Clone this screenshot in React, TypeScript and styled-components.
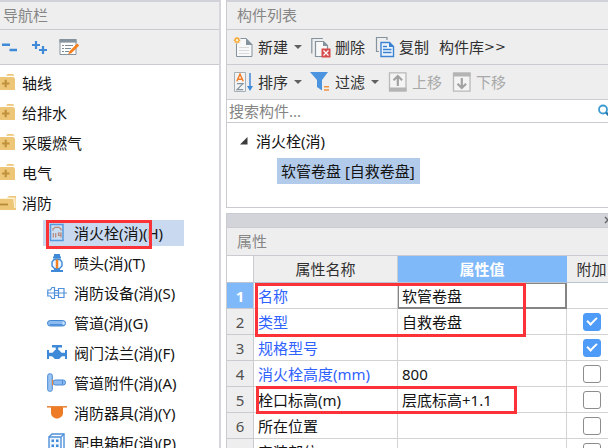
import React from "react";
import styled, { createGlobalStyle, css } from "styled-components";

const line = "#c9cbd0";
const blue = "#3f8ad8";
const steel = "#84939e";

const GlobalStyle = createGlobalStyle`
  *, *::before, *::after { box-sizing: border-box; }
  body {
    margin: 0;
    background: #fff;
    color: #141414;
    font: 15px/20px "Noto Sans", "Noto Sans CJK SC", sans-serif;
  }
  button, input { font: inherit; color: inherit; }
`;

const Workspace = styled.div`
  display: flex;
  gap: 5px;
  height: 100vh;
  overflow: hidden;
`;

const Sidebar = styled.aside`
  flex: 0 0 221px;
  display: flex;
  flex-direction: column;
  overflow: hidden;
  border-top: 2px solid #d0d2d8;
  border-right: 2px solid #d6d7dc;
`;

const Main = styled.main`
  flex: 1;
  min-width: 0;
  display: flex;
  flex-direction: column;
  gap: 5px;
  overflow: hidden;
`;

const Panel = styled.section<{ $grow?: boolean }>`
  display: flex;
  flex-direction: column;
  overflow: hidden;
  border-left: 1px solid ${line};
  ${(p) =>
    p.$grow
      ? css`flex: 1;`
      : css`
          flex: none;
          border-top: 2px solid #d0d2d8;
          border-bottom: 1px solid ${line};
        `}
`;

const PanelTitle = styled.h2<{ $inset: number }>`
  flex: none;
  margin: 0;
  padding: 3px 0 4px ${(p) => p.$inset}px;
  border-bottom: 1px solid ${line};
  background: #eee;
  color: #868686;
  font-size: 15px;
  font-weight: 400;
  line-height: 20px;
`;

const Toolbar = styled.div<{ $inset?: number }>`
  flex: none;
  display: flex;
  align-items: center;
  gap: 10px;
  height: 35px;
  padding-left: ${(p) => p.$inset ?? 0}px;
  border-bottom: 1px solid ${line};
  background: #eee;
`;

const ToolButton = styled.button`
  flex: none;
  display: flex;
  align-items: center;
  gap: 4px;
  padding: 0;
  border: 0;
  background: none;
  color: #303030;
  white-space: nowrap;
  &:disabled { color: #a9a9a9; }
`;

const Caret = styled.span`
  margin: 0 -1px 0 2px;
  border: solid transparent;
  border-width: 4px 4px 0;
  border-top-color: #606060;
`;

const More = styled.span`
  margin-left: -4px;
  font: 13px/20px "DejaVu Sans", sans-serif;
`;

const Tree = styled.ul<{ $nested?: boolean }>`
  margin: 0;
  padding: ${(p) => (p.$nested ? "0 0 0 43px" : "3px 0 0")};
  list-style: none;
  white-space: nowrap;
`;

const Folder = styled.div`
  display: flex;
  align-items: center;
  gap: 6px;
  height: 30px;
`;

const Leaf = styled.li<{ $selected?: boolean }>`
  position: relative;
  display: flex;
  align-items: center;
  gap: 7px;
  width: max-content;
  min-width: 141px;
  height: 26px;
  margin: 2px 0 4px;
  padding: 0 4px;
  background: ${(p) => (p.$selected ? "#c9d9ef" : "transparent")};
`;

const Icon = styled.svg`
  display: block;
  flex: none;
  overflow: visible;
`;

const Mark = styled.div<{ $x: number; $y: number; $w: number; $h: number }>`
  position: absolute;
  left: ${(p) => p.$x}px;
  top: ${(p) => p.$y}px;
  width: ${(p) => p.$w}px;
  height: ${(p) => p.$h}px;
  border: 3px solid #fb3338;
  pointer-events: none;
`;

const Search = styled.form`
  flex: none;
  display: flex;
  align-items: center;
  height: 23px;
  border-bottom: 1px solid ${line};
  background: #fff;
`;

const SearchInput = styled.input`
  flex: 1;
  min-width: 0;
  height: 20px;
  padding: 0 2px;
  border: 0;
  outline: 0;
  background: none;
  &::placeholder { color: #858585; opacity: 1; }
`;

const EdgeButton = styled.button`
  flex: none;
  margin-right: -5px;
  padding: 0;
  border: 0;
  background: none;
`;

const ComponentList = styled.div`
  display: flex;
  flex-direction: column;
  align-items: flex-start;
  gap: 4px;
  padding: 5px 0 23px;
`;

const Group = styled.div`
  display: flex;
  align-items: center;
  gap: 8px;
  height: 26px;
  padding-left: 13px;
`;

const SelectedComponent = styled.div`
  height: 26px;
  margin-left: 50px;
  padding: 3px 5px 3px 4px;
  background: #b2cbea;
`;

const Splitter = styled.div`
  flex: none;
  display: flex;
  align-items: center;
  justify-content: flex-end;
  height: 15px;
  border: solid ${line};
  border-width: 1px 0;
  background: #d3d4da;
`;

const GridArea = styled.div`
  position: relative;
  flex: 1;
  overflow: hidden;
`;

const Grid = styled.table`
  width: 390px;
  table-layout: fixed;
  border-collapse: separate;
  border-spacing: 0;
  white-space: nowrap;
`;

const Col = styled.col<{ $w: number }>`
  width: ${(p) => p.$w}px;
`;

const cell = css`
  height: 26px;
  padding: 0;
  border: solid #d3d3d3;
  border-width: 0 1px 1px 0;
  font-weight: 400;
`;

const HeadCell = styled.th<{ $active?: boolean; $corner?: boolean }>`
  ${cell}
  height: 27px;
  border-color: ${(p) => (p.$active ? "#7fb9fa" : "#cbccd0")};
  border-bottom-color: #b9c4d2;
  background: ${(p) => (p.$active ? "#7fb9fa" : p.$corner ? "#fff" : "#eee")};
  color: ${(p) => (p.$active ? "#fff" : "#303030")};
  font-weight: ${(p) => (p.$active ? 700 : 400)};
`;

const RowNumber = styled.th<{ $active?: boolean }>`
  ${cell}
  border-color: ${line};
  background: ${(p) => (p.$active ? "#7fb9fa" : "#eee")};
  color: ${(p) => (p.$active ? "#fff" : "#505050")};
  font-weight: ${(p) => (p.$active ? 700 : 400)};
`;

const NameCell = styled.td<{ $link?: boolean }>`
  ${cell}
  padding-left: 4px;
  color: ${(p) => (p.$link ? "#2f62ff" : "#141414")};
`;

const ValueCell = styled.td<{ $focus?: boolean }>`
  ${cell}
  padding-left: 4px;
  ${(p) =>
    p.$focus &&
    css`
      border-color: #858585;
      box-shadow: inset 1px 1px #858585, inset -1px -1px #858585;
    `}
`;

const CheckCell = styled.td`
  ${cell}
`;

const Check = styled.input`
  appearance: none;
  display: block;
  width: 18px;
  height: 18px;
  margin: 0 auto;
  border: 1px solid #8c8c8c;
  border-radius: 3px;
  background: #fff;
  &:checked {
    border-color: #4f9bf8;
    background: #4f9bf8;
  }
  &:checked::before {
    content: "";
    display: block;
    width: 6px;
    height: 10px;
    margin: 1px 0 0 5px;
    border: solid #fff;
    border-width: 0 2px 2px 0;
    transform: rotate(45deg);
  }
`;

const NavIcon = ({ children }: { children: React.ReactNode }) => (
  <Icon width="20" height="20" viewBox="0 0 20 20" aria-hidden="true" fill="none">
    {children}
  </Icon>
);

const CollapseIcon = () => (
  <NavIcon>
    <path d="M2 7.8h8M9.5 13h7.5" stroke={blue} strokeWidth="2.4" />
  </NavIcon>
);

const ExpandIcon = () => (
  <NavIcon>
    <path d="M2 8h8M6 4v8M9 13h8M13 9v8" stroke={blue} strokeWidth="2.2" />
  </NavIcon>
);

const EditIcon = () => (
  <NavIcon>
    <path d="M0 2.5h16v15H0z" fill="#fff" stroke={steel} />
    <path d="M-.5 2h17v3.6h-17z" fill={steel} />
    <path d="M2 8.5h2M2 11.5h2M2 14.5h2M5 8.5h8M5 11.5h6M5 14.5h4" stroke="#7d8b96" />
    <path d="m9.5 14.2-1.4 3 3.3-1 7.8-7.6-2.1-2z" fill="#f5811f" />
  </NavIcon>
);

const FolderIcon = ({ open }: { open?: boolean }) => (
  <Icon width="16" height="20" viewBox="0 0 16 20" aria-hidden="true" fill="none">
    {open ? (
      <>
        <path d="M0 5h7l2-2h7v14H0z" fill="#edc678" />
        <path d="M0 5.5h13.5L15 15V5H8" stroke="#fff3d7" strokeWidth="1" />
        <path d="M0 11.5h8" stroke="#b98a35" strokeWidth="1.8" />
      </>
    ) : (
      <>
        <path d="M6 2.8 7.5 1H13l1.5 1.8z" fill="#edc678" />
        <path d="M0 4h13.5L15 5.5V17H0z" fill="#edc678" />
        <path d="M2 10.5h7.5M5.7 6.8v7.4" stroke="#c1923c" strokeWidth="2.2" />
      </>
    )}
  </Icon>
);

const HydrantIcon = () => (
  <NavIcon>
    <path d="M3.5 1.5H16v16H3.5z" fill="#c9ddf3" stroke="#5799df" strokeWidth="1.5" />
    <path d="M6 7.5V6l2-1.7h4L14 6v1.5" stroke="#b98777" strokeWidth="1.3" />
    <path d="M6.3 10v4.5M8.7 10v4.5M14 14.5V10h-2.5v2.3H14" stroke="#b98777" strokeWidth="1.2" />
  </NavIcon>
);

const SprinklerIcon = () => (
  <NavIcon>
    <path d="M7 1h6v3l-1 1.5H8L7 4z" fill={blue} />
    <path d="M6 4.5h8M4 18h12" stroke={blue} strokeWidth="1.8" />
    <path d="M7 6.5h6L15 9v4l-3 3H8l-3-3V9z" fill="#eef4fb" stroke={blue} strokeWidth="1.4" />
    <path d="M7.5 15h5l1 3h-7z" fill={blue} />
    <path d="M10 6.5v9" stroke="#f08126" strokeWidth="2.4" />
  </NavIcon>
);

const DeviceIcon = () => (
  <NavIcon>
    <g stroke="#4f91da" strokeWidth="1.2">
      <path d="M.8 7v6h2.7l1.5 2.5h2.5v-11H5L3.5 7zM7.5 7.5h4M7.5 12.5h4M11.5 5.5H17v9h-5.5zM0 10h20" />
    </g>
  </NavIcon>
);

const PipeIcon = () => (
  <NavIcon>
    <rect x=".5" y="7.5" width="18" height="5.5" rx="2.7" fill="#8dbbf0" stroke="#4489d6" />
    <path d="M3 11.8h14" stroke="#4489d6" strokeWidth="1.4" />
    <ellipse cx="16.4" cy="10.2" rx="1.2" ry="1.8" fill="#c5defa" />
  </NavIcon>
);

const ValveIcon = () => (
  <NavIcon>
    <path d="M5 3.3h10M10 3v5" stroke={blue} strokeWidth="2.6" />
    <path d="M1 7v9M19 7v9" stroke={blue} strokeWidth="2" />
    <path d="M1 9.8h4.5L8 7h4l2.5 2.8H19v3.4h-4L12 16H8l-3-2.8H1z" fill={blue} />
  </NavIcon>
);

const FittingIcon = () => (
  <NavIcon>
    <rect x="6" y="7" width="12.5" height="5" rx="2.3" fill="#8dbbf0" stroke="#4489d6" />
    <rect x=".7" y=".8" width="4.6" height="17.5" rx="1.8" fill="#9cc5f3" stroke="#4489d6" />
    <path d="M5.5 6.5v6" stroke="#e8873b" strokeWidth="1.2" />
    <path d="M15.5 7.5v4" stroke="#4489d6" />
  </NavIcon>
);

const ApplianceIcon = () => (
  <NavIcon>
    <path d="M0 3h20v1.6H0z" fill="#e9883f" />
    <path d="M4 4h12v6c0 3-3 5.5-6 5.5S4 13 4 10z" fill="#ee7b25" />
  </NavIcon>
);

const CabinetIcon = () => (
  <NavIcon>
    <path d="M2 4 5 1h12v16l-3 3" stroke="#4f91da" strokeWidth="1.4" />
    <path d="M2 4h12v16H2zM14 4l3-3" fill="#eef5fd" stroke="#4f91da" strokeWidth="1.4" />
    <path d="M4.5 6.5H7V9H4.5zM9 6.5h2.5V9H9zM4.5 11.5H7V14H4.5zM9 11.5h2.5V14H9z" fill="#3f8ad8" />
    <path d="M4 17h8" stroke="#4f91da" />
  </NavIcon>
);

const NewIcon = () => (
  <NavIcon>
    <path d="M2.5 1.5H12l6 6v12H2.5z" fill="#f8f8f8" stroke={steel} />
    <path d="M12 1v7h6.5z" fill={steel} />
    <path d="M5 10.5h10M5 13.5h10M5 16.5h10" stroke="#d8dadc" />
    <path d="M-.5-.5h7v7h-7z" fill="#eee" />
    <path d="M3 0v6.4M-.2 3.2h6.4M.8 1l4.4 4.4M5.2 1 .8 5.4" stroke="#f5a733" strokeWidth="1.4" />
    <circle cx="3" cy="3.2" r="1.2" fill="#fff3d0" />
  </NavIcon>
);

const DeleteIcon = () => (
  <NavIcon>
    <path d="M.8 16.5v-15h11" stroke={steel} strokeWidth="1.2" />
    <path d="M4.5 4.5h8l4 4v11h-12z" fill="#f8f8f8" stroke={steel} strokeWidth="1.2" />
    <path d="M12 4v5h5z" fill={steel} />
    <path d="M10.5 11.5h9v9h-9z" fill="#d64b4b" />
    <path d="m12.5 13.5 5 5M17.5 13.5l-5 5" stroke="#fff" strokeWidth="1.3" />
  </NavIcon>
);

const CopyIcon = () => (
  <NavIcon>
    <path d="M4 14.5H1.5v-14H12V3" stroke={steel} strokeWidth="1.2" />
    <path d="M6 5.5h8.5l4 4v10H6z" fill="#edf4fc" stroke="#3c82d2" strokeWidth="1.4" />
    <path d="M14 5v5h5z" fill="#3c82d2" />
    <path d="M8 9.5h4M8 12.5h8.5M8 15.5h8.5" stroke="#3c82d2" strokeWidth="1.3" />
  </NavIcon>
);

const SortIcon = () => (
  <NavIcon>
    <path d="M.5.5h11v19H.5z" fill="#f4f4f4" stroke="#a4afb7" />
    <path d="M2.8 9.2 6 2l3.2 7.2M4 7.2h4" stroke="#ef7f2a" strokeWidth="1.5" />
    <path d="M3 11.7h6l-6 6h6.2" stroke={steel} strokeWidth="1.2" />
    <path d="M16 1v14" stroke={blue} strokeWidth="1.5" />
    <path d="M13 14h6l-3 5z" fill={blue} />
  </NavIcon>
);

const FilterIcon = () => (
  <NavIcon>
    <path d="M-1 0h18l-6 8v10.5L6 15V8z" fill="#4c94df" />
    <path d="M13 14.8h5M13 18h5" stroke="#ef9340" strokeWidth="1.6" />
  </NavIcon>
);

const MoveIcon = ({ down }: { down?: boolean }) => (
  <NavIcon>
    <g transform={down ? "matrix(1 0 0 -1 0 20)" : undefined}>
      <path d="M1.5 .8H18v18H1.5z" fill="#f4f4f4" stroke="#b9b9b9" strokeWidth="1.3" />
      <path d="M1 15.5h17.5v4H1z" fill="#b4b4b4" />
      <path d="M9.8 14V4M5.5 8.3 9.8 4l4.3 4.3" stroke="#a2a2a2" strokeWidth="2.2" />
    </g>
  </NavIcon>
);

const folders = ["轴线", "给排水", "采暖燃气", "电气"];

const fireItems = [
  { label: "消火栓(消)(H)", icon: <HydrantIcon /> },
  { label: "喷头(消)(T)", icon: <SprinklerIcon /> },
  { label: "消防设备(消)(S)", icon: <DeviceIcon /> },
  { label: "管道(消)(G)", icon: <PipeIcon /> },
  { label: "阀门法兰(消)(F)", icon: <ValveIcon /> },
  { label: "管道附件(消)(A)", icon: <FittingIcon /> },
  { label: "消防器具(消)(Y)", icon: <ApplianceIcon /> },
  { label: "配电箱柜(消)(P)", icon: <CabinetIcon /> },
];

type Property = { name: string; value: string; link?: boolean; extra?: boolean };

const properties: Property[] = [
  { name: "名称", value: "软管卷盘", link: true },
  { name: "类型", value: "自救卷盘", link: true, extra: true },
  { name: "规格型号", value: "", link: true, extra: true },
  { name: "消火栓高度(mm)", value: "800", link: true, extra: false },
  { name: "栓口标高(m)", value: "层底标高+1.1", extra: false },
  { name: "所在位置", value: "", extra: false },
  { name: "安装部位", value: "", extra: false },
];

export default function App() {
  return (
    <>
      <GlobalStyle />
      <Workspace>
        <Sidebar>
          <PanelTitle $inset={3}>导航栏</PanelTitle>
          <Toolbar>
            <ToolButton aria-label="全部折叠"><CollapseIcon /></ToolButton>
            <ToolButton aria-label="全部展开"><ExpandIcon /></ToolButton>
            <ToolButton aria-label="编辑"><EditIcon /></ToolButton>
          </Toolbar>
          <Tree>
            {folders.map((name) => (
              <li key={name}>
                <Folder><FolderIcon />{name}</Folder>
              </li>
            ))}
            <li>
              <Folder><FolderIcon open />消防</Folder>
              <Tree $nested>
                {fireItems.map((item, i) => (
                  <Leaf key={item.label} $selected={i === 0}>
                    {item.icon}
                    {item.label}
                    {i === 0 && <Mark $x={3} $y={0} $w={106} $h={29} />}
                  </Leaf>
                ))}
              </Tree>
            </li>
          </Tree>
        </Sidebar>

        <Main>
          <Panel>
            <PanelTitle $inset={10}>构件列表</PanelTitle>
            <Toolbar $inset={7}>
              <ToolButton><NewIcon />新建<Caret /></ToolButton>
              <ToolButton><DeleteIcon />删除</ToolButton>
              <ToolButton><CopyIcon />复制</ToolButton>
              <ToolButton>构件库<More>&gt;&gt;</More></ToolButton>
            </Toolbar>
            <Toolbar $inset={7}>
              <ToolButton><SortIcon />排序<Caret /></ToolButton>
              <ToolButton><FilterIcon />过滤<Caret /></ToolButton>
              <ToolButton disabled><MoveIcon />上移</ToolButton>
              <ToolButton disabled><MoveIcon down />下移</ToolButton>
            </Toolbar>
            <Search onSubmit={(e) => e.preventDefault()}>
              <SearchInput aria-label="搜索构件" placeholder="搜索构件..." />
              <EdgeButton aria-label="搜索">
                <Icon width="16" height="16" viewBox="0 0 16 16" fill="none" stroke="#3c9bd0" strokeWidth="1.8">
                  <circle cx="6" cy="6.5" r="4" />
                  <path d="m9 9.5 4.5 4.5" stroke="#2277ad" strokeWidth="2.4" />
                </Icon>
              </EdgeButton>
            </Search>
            <ComponentList>
              <Group>
                <Icon width="8" height="8" viewBox="0 0 8 8"><path d="M7.5 0v7.5H0z" fill="#3c3c3c" /></Icon>
                消火栓(消)
              </Group>
              <SelectedComponent>软管卷盘 [自救卷盘]</SelectedComponent>
            </ComponentList>
          </Panel>

          <Panel $grow>
            <Splitter>
              <EdgeButton aria-label="关闭">
                <Icon width="9" height="9" viewBox="0 0 9 9"><path d="m1 1 6 6M7 1 1 7" stroke="#666" strokeWidth="1.4" /></Icon>
              </EdgeButton>
            </Splitter>
            <PanelTitle $inset={10}>属性</PanelTitle>
            <GridArea>
              <Grid>
                <colgroup>
                  <Col $w={27} />
                  <Col $w={144} />
                  <Col $w={169} />
                  <Col $w={50} />
                </colgroup>
                <thead>
                  <tr>
                    <HeadCell $corner aria-label="序号" />
                    <HeadCell>属性名称</HeadCell>
                    <HeadCell $active>属性值</HeadCell>
                    <HeadCell>附加</HeadCell>
                  </tr>
                </thead>
                <tbody>
                  {properties.map((p, i) => (
                    <tr key={p.name}>
                      <RowNumber scope="row" $active={i === 0}>{i + 1}</RowNumber>
                      <NameCell $link={p.link}>{p.name}</NameCell>
                      <ValueCell $focus={i === 0}>{p.value}</ValueCell>
                      <CheckCell>
                        {p.extra !== undefined && (
                          <Check type="checkbox" defaultChecked={p.extra} aria-label={`附加 ${p.name}`} />
                        )}
                      </CheckCell>
                    </tr>
                  ))}
                </tbody>
              </Grid>
              <Mark $x={28} $y={27} $w={271} $h={54} />
              <Mark $x={29} $y={130} $w={261} $h={28} />
            </GridArea>
          </Panel>
        </Main>
      </Workspace>
    </>
  );
}
